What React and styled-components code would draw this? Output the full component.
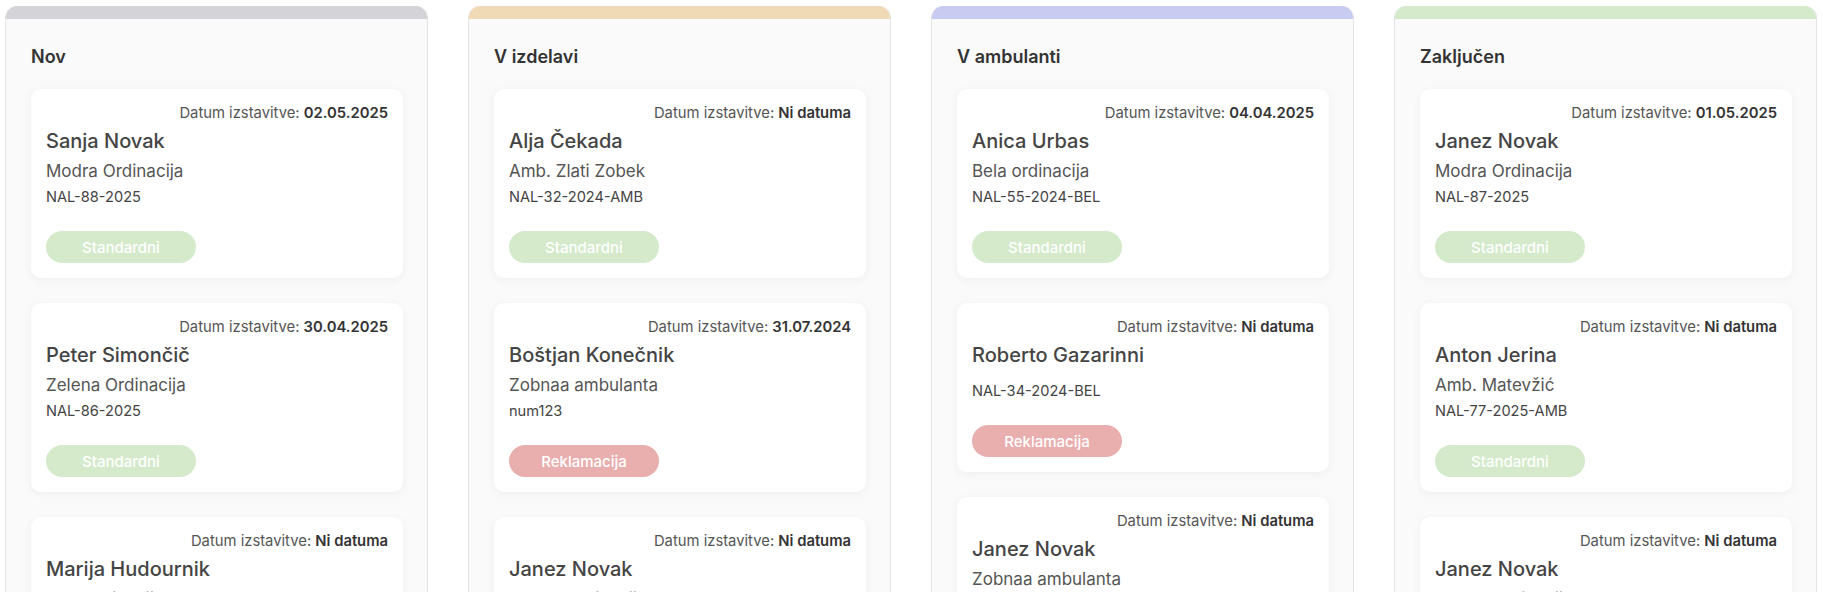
import styled, { createGlobalStyle } from 'styled-components';

const GlobalStyle = createGlobalStyle`
    * { box-sizing: border-box; }
    body {
        margin: 0;
        background: #ffffff;
        font-family: Inter, "Noto Sans", "Liberation Sans", sans-serif;
        color: #333;
    }
`;

const Board = styled.div`
    display: grid;
    grid-template-columns: repeat(4, 1fr);
    gap: 40px;
    padding: 6px 6px 0 5px;
    align-items: start;
`;

const Column = styled.section`
    background: #fafafa;
    border: 1px solid #e4e4e7;
    border-top: none;
    border-radius: 12px 12px 0 0;
    overflow: hidden;
    min-height: 700px;
`;

const Bar = styled.div`
    height: 13px;
    background: ${(p) => p.$color};
`;

const ColumnBody = styled.div`
    padding: 24px 24px 24px 25px;
`;

const Title = styled.h3`
    margin: 0 0 18px 0;
    font-size: 18px;
    line-height: 28px;
    font-weight: 600;
    color: #333;
`;

const CardList = styled.div`
    display: flex;
    flex-direction: column;
    gap: 25px;
`;

const Card = styled.div`
    background: #ffffff;
    border-radius: 10px;
    padding: 14px 15px 15px 15px;
    box-shadow: 0 2px 10px rgba(0, 0, 0, 0.05);
    display: flex;
    flex-direction: column;
`;

const DateLine = styled.div`
    text-align: right;
    font-size: 14.8px;
    line-height: 20px;
    color: #555;
    b {
        font-weight: 600;
        color: #333;
    }
`;

const Name = styled.div`
    margin-top: 4px;
    font-size: 20px;
    line-height: 28px;
    font-weight: 500;
    color: #444;
`;

const Clinic = styled.div`
    margin-top: 4px;
    font-size: 17px;
    line-height: 24px;
    height: ${(p) => (p.$empty ? '4px' : '24px')};
    color: #555;
`;

const Code = styled.div`
    margin-top: 4px;
    font-size: 14.6px;
    line-height: 20px;
    color: #444;
`;

const Badge = styled.span`
    margin-top: 24px;
    width: 150px;
    height: 32px;
    border-radius: 16px;
    display: flex;
    align-items: center;
    justify-content: center;
    font-size: 15px;
    font-weight: 500;
    color: #ffffff;
    background: ${(p) => (p.$type === 'Reklamacija' ? '#e9afaf' : '#d4eacb')};
`;

const columns = [
    {
        title: 'Nov',
        color: '#d3d3d8',
        cards: [
            { date: '02.05.2025', name: 'Sanja Novak', clinic: 'Modra Ordinacija', code: 'NAL-88-2025', type: 'Standardni' },
            { date: '30.04.2025', name: 'Peter Simončič', clinic: 'Zelena Ordinacija', code: 'NAL-86-2025', type: 'Standardni' },
            { date: null, name: 'Marija Hudournik', clinic: 'Bela ordinacija', code: 'NAL-85-2025', type: 'Standardni' },
        ],
    },
    {
        title: 'V izdelavi',
        color: '#f0d9b5',
        cards: [
            { date: null, name: 'Alja Čekada', clinic: 'Amb. Zlati Zobek', code: 'NAL-32-2024-AMB', type: 'Standardni' },
            { date: '31.07.2024', name: 'Boštjan Konečnik', clinic: 'Zobnaa ambulanta', code: 'num123', type: 'Reklamacija' },
            { date: null, name: 'Janez Novak', clinic: 'Modra Ordinacija', code: 'NAL-90-2025', type: 'Standardni' },
        ],
    },
    {
        title: 'V ambulanti',
        color: '#c9ccf1',
        cards: [
            { date: '04.04.2025', name: 'Anica Urbas', clinic: 'Bela ordinacija', code: 'NAL-55-2024-BEL', type: 'Standardni' },
            { date: null, name: 'Roberto Gazarinni', clinic: '', code: 'NAL-34-2024-BEL', type: 'Reklamacija' },
            { date: null, name: 'Janez Novak', clinic: 'Zobnaa ambulanta', code: 'NAL-41-2024', type: 'Standardni' },
        ],
    },
    {
        title: 'Zaključen',
        color: '#d4eacb',
        cards: [
            { date: '01.05.2025', name: 'Janez Novak', clinic: 'Modra Ordinacija', code: 'NAL-87-2025', type: 'Standardni' },
            { date: null, name: 'Anton Jerina', clinic: 'Amb. Matevžić', code: 'NAL-77-2025-AMB', type: 'Standardni' },
            { date: null, name: 'Janez Novak', clinic: 'Modra Ordinacija', code: 'NAL-80-2025', type: 'Standardni' },
        ],
    },
];

const OrderCard = ({ card }) => (
    <Card>
        <DateLine>
            Datum izstavitve: <b>{card.date || 'Ni datuma'}</b>
        </DateLine>
        <Name>{card.name}</Name>
        <Clinic $empty={!card.clinic}>{card.clinic}</Clinic>
        <Code>{card.code}</Code>
        <Badge $type={card.type}>{card.type}</Badge>
    </Card>
);

const App = () => (
    <>
        <GlobalStyle />
        <Board>
            {columns.map((col) => (
                <Column key={col.title}>
                    <Bar $color={col.color} />
                    <ColumnBody>
                        <Title>{col.title}</Title>
                        <CardList>
                            {col.cards.map((card, i) => (
                                <OrderCard key={i} card={card} />
                            ))}
                        </CardList>
                    </ColumnBody>
                </Column>
            ))}
        </Board>
    </>
);

export default App;
